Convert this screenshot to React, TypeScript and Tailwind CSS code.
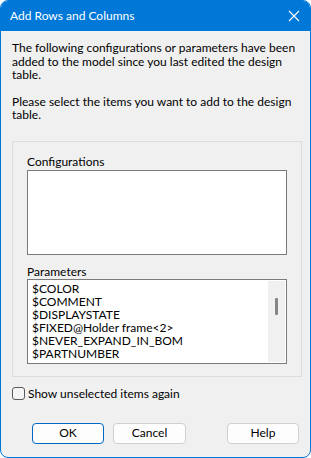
import React from "react";

const font = { fontFamily: 'Lato, "Noto Sans", sans-serif' };

export default function App() {
  const params = [
    "$COLOR",
    "$COMMENT",
    "$DISPLAYSTATE",
    "$FIXED@Holder frame<2>",
    "$NEVER_EXPAND_IN_BOM",
    "$PARTNUMBER",
  ];
  return (
    <div className="w-[311px] h-[458px] bg-white" style={font}>
      <div className="w-[311px] h-[458px] rounded-[8px] border border-[#0078d7] bg-[#f0f0f0] overflow-hidden flex flex-col">
        <div className="h-[30px] bg-[#0078d7] flex items-center justify-between pl-[9px] pr-[9px] shrink-0">
          <span className="text-white text-[12px] leading-none">Add Rows and Columns</span>
          <svg width="12" height="12" viewBox="0 0 12 12" className="mr-[1px]">
            <path d="M1 1 L11 11 M11 1 L1 11" stroke="white" strokeWidth="1.1" fill="none" />
          </svg>
        </div>
        <div className="px-[11px] pt-[10px] text-[12px] leading-[13.5px] text-black">
          <p className="w-[292px]">
            The following configurations or parameters have been added to the model since you last edited the design table.
          </p>
          <p className="w-[292px] mt-[13px]">
            Please select the items you want to add to the design table.
          </p>
        </div>
        <div className="ml-[11px] mt-[19px] w-[290px] h-[236px] border border-[#dcdcdc] px-[14px] pt-[13px] text-[12px]">
          <div className="leading-[14px]">Configurations</div>
          <div className="h-[85px] bg-white border border-[#7a7a7a] mt-[1px]"></div>
          <div className="leading-[14px] mt-[10px]">Parameters</div>
          <div className="h-[85px] bg-white border border-[#7a7a7a] flex overflow-hidden">
            <div className="flex-1 pl-[4px] pt-[2px] overflow-hidden">
              {params.map((p) => (
                <div key={p} className="leading-[13px] h-[13px] whitespace-nowrap">{p}</div>
              ))}
            </div>
            <div className="w-[17px] bg-[#f0f0f0] my-[1px] mr-[1px] flex justify-center">
              <div className="w-[3px] h-[17px] bg-[#858585] rounded-[1px] mt-[17px]"></div>
            </div>
          </div>
        </div>
        <label className="ml-[11px] mt-[10px] flex items-center gap-[3px] text-[12px] leading-[14px]">
          <span className="w-[13px] h-[13px] rounded-[3px] border border-[#5a5a5a] bg-[#f5f5f5] inline-block"></span>
          <span>Show unselected items again</span>
        </label>
        <div className="flex mt-[22px] text-[12px]">
          <button className="ml-[31px] w-[72px] h-[21px] rounded-[4px] border border-[#0067c0] bg-[#fdfdfd] flex items-center justify-center leading-none">OK</button>
          <button className="ml-[9px] w-[73px] h-[21px] rounded-[4px] border border-[#d0d0d0] bg-[#fdfdfd] flex items-center justify-center leading-none">Cancel</button>
          <button className="ml-[41px] w-[72px] h-[21px] rounded-[4px] border border-[#d0d0d0] bg-[#fdfdfd] flex items-center justify-center leading-none">Help</button>
        </div>
      </div>
    </div>
  );
}
